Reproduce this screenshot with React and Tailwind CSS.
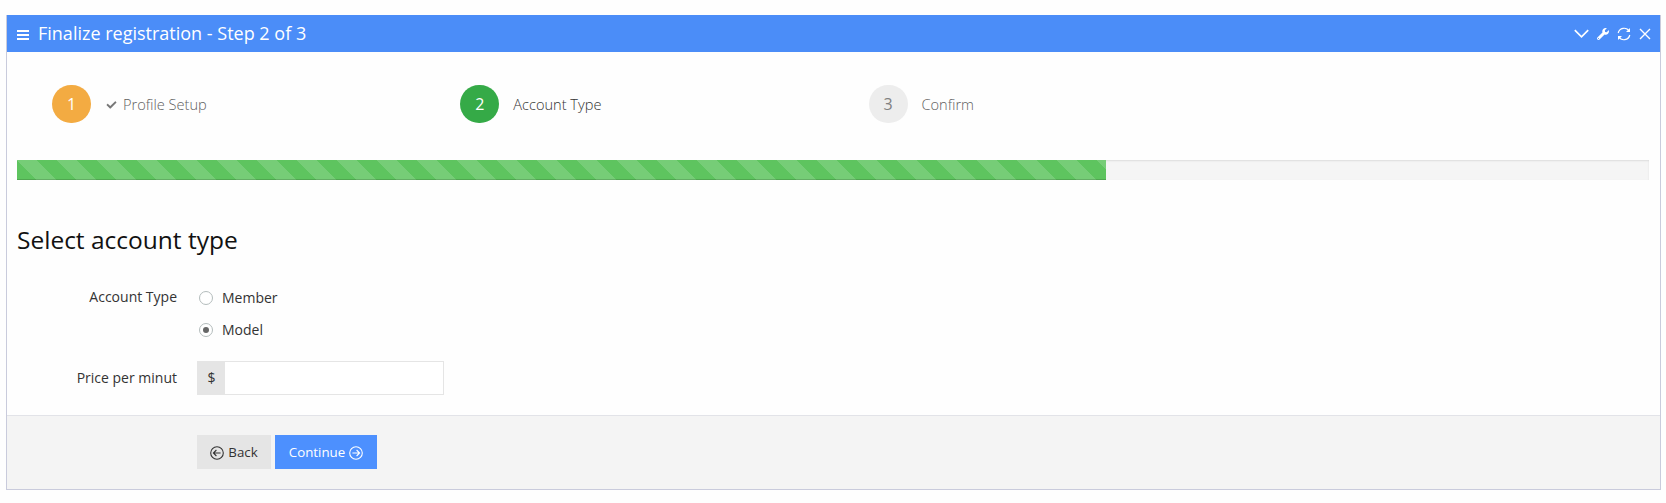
import React from 'react';
import { FaCheck, FaWrench } from 'react-icons/fa';

const steps = [
  { number: 1, title: 'Profile Setup', done: true, badge: 'bg-[#f3ab42] text-white', label: 'text-[#606060]' },
  { number: 2, title: 'Account Type', done: false, badge: 'bg-[#35aa47] text-white', label: 'text-[#333333]' },
  { number: 3, title: 'Confirm', done: false, badge: 'bg-[#ededed] text-[#808080]', label: 'text-[#606060]' }
];

const accountTypes = [
  { id: 'member', name: 'Member' },
  { id: 'model', name: 'Model' }
];

const ArrowCircle = ({ className }) => (
  <svg viewBox="0 0 14 14" className={className} fill="none" stroke="currentColor" strokeWidth="1.1">
    <circle cx="7" cy="7" r="6.3" />
    <path d="M3.4 7h7.2M7.6 4l3 3-3 3" />
  </svg>
);

const PanelTools = () => (
  <div className="flex items-center pt-px text-white">
    <svg viewBox="0 0 15 10" className="h-[10px] w-[15px]" fill="none" stroke="currentColor" strokeWidth="1.7">
      <path d="M0.8 1.2l6.7 6.6 6.7-6.6" />
    </svg>
    <FaWrench className="ml-2 h-[12px] w-[12px]" />
    <svg viewBox="0 0 14 14" className="ml-2 h-[14px] w-[14px]" fill="none" stroke="currentColor" strokeWidth="1.2">
      <path d="M1.2 6A6 6 0 0 1 12.2 4.2M12.8 8A6 6 0 0 1 1.8 9.8" />
      <path d="M13 1v4H9zM1 13V9h4z" fill="currentColor" stroke="none" />
    </svg>
    <svg viewBox="0 0 12 12" className="ml-2 h-[12px] w-[12px]" fill="none" stroke="currentColor" strokeWidth="1.4">
      <path d="M1 1l10 10M11 1L1 11" />
    </svg>
  </div>
);

const App = () => {
  const [accountType, setAccountType] = React.useState('model');

  return (
    <div className="h-[503px] bg-[#fefefe] px-[6px] pt-[15px] font-['Open_Sans',sans-serif] text-sm text-[#333333]">
      <div className="h-[475px] w-[1655px] border-x border-b border-[#c9cbdc]">
        {/* Header */}
        <div className="flex h-[37px] items-center justify-between bg-[#4b8df8] pr-[9px] pl-[10px]">
          <div className="flex items-center text-white">
            <svg viewBox="0 0 12 10" className="mt-[2px] h-[10px] w-[12px]" fill="currentColor">
              <path d="M0 0h12v2H0zM0 4h12v2H0zM0 8h12v2H0z" />
            </svg>
            <h1 className="mb-[2px] ml-[9px] text-[18px] leading-6">Finalize registration - Step 2 of 3</h1>
          </div>
          <PanelTools />
        </div>

        {/* Steps */}
        <div className="mx-[10px] grid h-[108px] grid-cols-4 pt-[33px]">
          {steps.map((step) => (
            <div key={step.number} className="flex h-[38px] items-center pl-[35px]">
              <span className={`flex h-[38px] w-[39px] items-center justify-center rounded-full text-base ${step.badge}`}>
                {step.number}
              </span>
              <span className={`ml-[14px] flex items-center text-[14.6px] font-light ${step.label}`}>
                {step.done && <FaCheck className="mt-[2px] mr-[6px] ml-px h-[10px] w-[11px] text-[#777777]" />}
                {step.title}
              </span>
            </div>
          ))}
        </div>

        {/* Progress */}
        <div className="mr-[11px] ml-[10px] h-5 bg-[#f5f5f5] shadow-[inset_0_1px_2px_rgba(0,0,0,0.1)]">
          <div className="h-full w-[1089px] bg-[#5ec45f] bg-[linear-gradient(45deg,rgba(255,255,255,0.15)_25%,transparent_25%,transparent_50%,rgba(255,255,255,0.15)_50%,rgba(255,255,255,0.15)_75%,transparent_75%,transparent)] bg-[length:40px_40px] shadow-[inset_0_-1px_0_rgba(0,0,0,0.15)]" />
        </div>

        {/* Form */}
        <div className="h-[235px] px-[10px] pt-[43px]">
          <h2 className="text-[24.5px] leading-[34px] text-[#111111]">Select account type</h2>

          <div className="mt-[30px] flex">
            <span className="w-[160px] text-right leading-5">Account Type</span>
            <div className="ml-[22px]">
              {accountTypes.map((type) => (
                <button
                  key={type.id}
                  type="button"
                  onClick={() => setAccountType(type.id)}
                  className="flex h-8 items-start"
                >
                  <span className="mt-[4px] flex size-[14px] items-center justify-center rounded-full border border-[#b4bcbc] bg-white">
                    {accountType === type.id && <span className="size-[6px] rounded-full bg-[#666666]" />}
                  </span>
                  <span className="ml-[9px] leading-[22px]">{type.name}</span>
                </button>
              ))}
            </div>
          </div>

          <div className="mt-[10px] flex items-center">
            <label htmlFor="price" className="w-[160px] text-right">Price per minut</label>
            <div className="ml-5 flex h-[34px] w-[247px] border border-[#e5e5e5] bg-white">
              <span className="flex w-[27px] items-center justify-center bg-[#e5e5e5]">$</span>
              <input id="price" type="text" className="min-w-0 flex-1 px-3 outline-none" />
            </div>
          </div>
        </div>

        {/* Actions */}
        <div className="flex h-[74px] gap-1 border-t border-[#e2e3e8] bg-[#f4f4f4] pt-[19px] pl-[190px] text-[13.3px]">
          <button type="button" className="flex h-[34px] w-[74px] items-center justify-center gap-1 bg-[#e5e5e5]">
            <ArrowCircle className="mt-px size-[14px] rotate-180" />
            Back
          </button>
          <button type="button" className="flex h-[34px] w-[102px] items-center justify-center gap-1 bg-[#4d90fe] text-white">
            Continue
            <ArrowCircle className="mt-px size-[14px]" />
          </button>
        </div>
      </div>
    </div>
  );
};

export default App;
